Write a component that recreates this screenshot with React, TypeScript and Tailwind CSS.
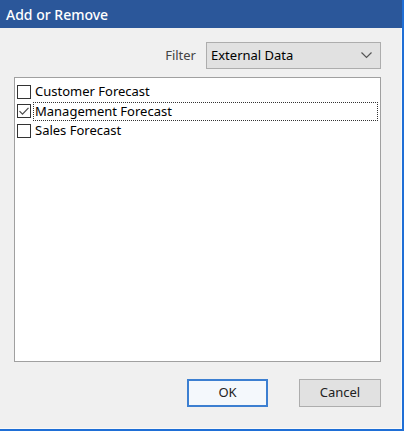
import React, { useState } from 'react';

const items = ['Customer Forecast', 'Management Forecast', 'Sales Forecast'];

const Checkbox: React.FC<{ checked: boolean }> = ({ checked }) => (
  <span className="flex items-center justify-center w-[14px] h-[14px] border border-[#333333] bg-white shrink-0">
    {checked && (
      <svg width="12" height="12" viewBox="0 0 12 12">
        <path d="M1.5 6.2 L4.5 9.2 L10.5 2.8" fill="none" stroke="#4a4a4a" strokeWidth="1.2" />
      </svg>
    )}
  </span>
);

export default function App() {
  const [checked, setChecked] = useState<Record<string, boolean>>({ 'Management Forecast': true });
  const [focused, setFocused] = useState('Management Forecast');

  return (
    <div
      className="w-[404px] h-[431px] bg-white text-black"
      style={{ fontFamily: '"Noto Sans", "Open Sans", sans-serif' }}
    >
      <div className="w-[404px] h-[431px] flex flex-col bg-[#f0f0f0] border-r-2 border-b-2 border-[#1f6fd6]">
        {/* Title bar */}
        <div className="h-[28px] bg-[#2b579a] flex items-center pl-[6px] text-white text-[14px] font-medium">
          Add or Remove
        </div>

        <div className="flex-1 flex flex-col pl-[14px] pr-[20px] border-r border-b border-[#f9f9f9]">
          {/* Filter */}
          <div className="mt-[14px] flex items-center justify-end gap-[10px]">
            <span className="text-[13px] text-[#444444]">Filter</span>
            <div className="w-[175px] h-[27px] bg-[#e1e1e1] border border-[#adadad] flex items-center justify-between pl-[4px] pr-[8px]">
              <span className="text-[13px]">External Data</span>
              <svg width="11" height="7" viewBox="0 0 11 7">
                <path d="M0.5 0.5 L5.5 5.5 L10.5 0.5" fill="none" stroke="#555555" strokeWidth="1.2" />
              </svg>
            </div>
          </div>

          {/* List */}
          <div className="mt-[8px] h-[285px] bg-white border border-[#a0a0a0] pt-[4px] pl-[2px] pr-[2px]">
            {items.map((item) => (
              <div
                key={item}
                className="h-[19.5px] flex items-center cursor-default"
                onClick={() => {
                  setFocused(item);
                  setChecked((c) => ({ ...c, [item]: !c[item] }));
                }}
              >
                <Checkbox checked={!!checked[item]} />
                <span
                  className={
                    'flex-1 ml-[2px] h-[19px] flex items-center pl-[1px] text-[13px] ' +
                    (focused === item ? 'border border-dotted border-[#333333]' : 'border border-transparent')
                  }
                >
                  {item}
                </span>
              </div>
            ))}
          </div>

          {/* Buttons */}
          <div className="mt-[17px] flex justify-end gap-[31px]">
            <button className="w-[81px] h-[28px] bg-[#f4f8fc] border-2 border-[#3c7fd1] text-[13px] text-[#222222]">
              OK
            </button>
            <button className="w-[82px] h-[28px] bg-[#e1e1e1] border border-[#adadad] text-[13px] text-[#222222]">
              Cancel
            </button>
          </div>
        </div>
      </div>
    </div>
  );
}
